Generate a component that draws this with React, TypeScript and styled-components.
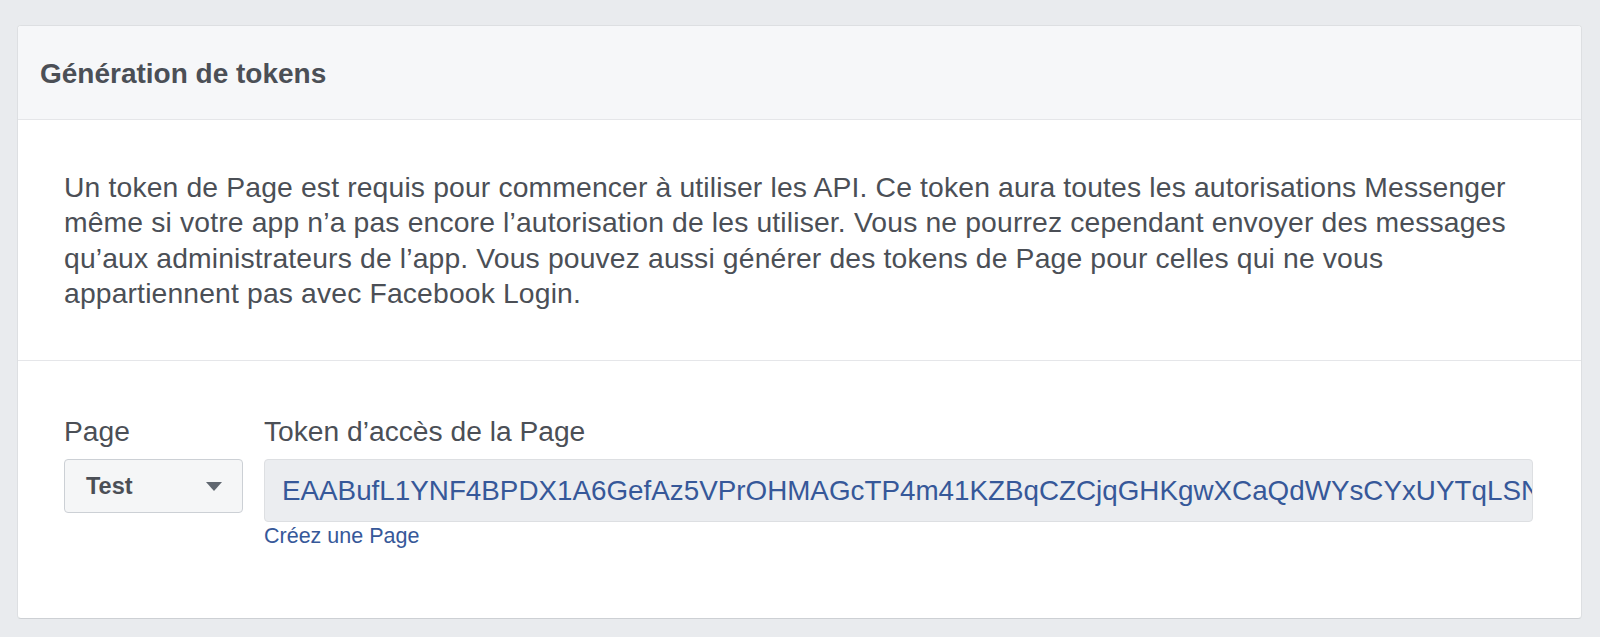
import styled, { createGlobalStyle } from "styled-components";

const GlobalStyle = createGlobalStyle`
  html, body {
    margin: 0;
    padding: 0;
    background-color: #e9ebee;
    font-family: "Liberation Sans", Arial, Helvetica, sans-serif;
  }
  #root {
    min-height: 637px;
    padding-top: 25px;
    box-sizing: border-box;
  }
`;

const Card = styled.section`
  margin: 0 18px 0 17px;
  background-color: #fff;
  border: 1px solid #dddfe2;
  border-bottom-color: #cdd0d4;
  border-radius: 4px;
  overflow: hidden;
`;

const CardHeader = styled.header`
  height: 94px;
  display: flex;
  align-items: center;
  padding: 2px 22px 0;
  box-sizing: border-box;
  background-color: #f6f7f9;
  border-bottom: 1px solid #e5e6e9;
  h2 {
    margin: 0;
    font-size: 28px;
    line-height: 35.3px;
    font-weight: bold;
    color: #4b4f56;
  }
`;

const Intro = styled.p`
  margin: 0;
  padding: 50px 40px 49px 46px;
  font-size: 28.3px;
  letter-spacing: 0.15px;
  line-height: 35.3px;
  color: #4b4f56;
  border-bottom: 1px solid #e5e6e9;
  white-space: nowrap;
`;

const FormRow = styled.div`
  display: flex;
  align-items: flex-start;
  gap: 21px;
  padding: 53px 48px 68px 46px;
`;

const Field = styled.div<{ $grow?: boolean }>`
  display: flex;
  flex-direction: column;
  flex: ${(p) => (p.$grow ? "1 1 auto" : "0 0 179px")};
  min-width: 0;
  label {
    font-size: 28.2px;
    line-height: 35.3px;
    color: #4b4f56;
    margin-bottom: 10px;
  }
`;

const SelectBox = styled.div`
  height: 54px;
  box-sizing: border-box;
  display: flex;
  align-items: center;
  justify-content: space-between;
  padding: 0 20px 0 21px;
  background-color: #f5f6f7;
  border: 1px solid #ccd0d5;
  border-radius: 4px;
  font-size: 23.5px;
  font-weight: bold;
  color: #4b4f56;
`;

const Arrow = styled.span`
  width: 0;
  height: 0;
  border-left: 8.5px solid transparent;
  border-right: 8.5px solid transparent;
  border-top: 9px solid #606770;
`;

const TokenInput = styled.div`
  height: 63px;
  box-sizing: border-box;
  display: flex;
  align-items: center;
  padding: 0 2px 0 17px;
  background-color: #ebedf0;
  border: 1px solid #dddfe2;
  border-radius: 4px;
  font-size: 27.8px;
  color: #365899;
  white-space: nowrap;
  overflow: hidden;
  text-overflow: clip;
`;

const HelpLink = styled.a`
  font-size: 21.5px;
  line-height: 28px;
  color: #365899;
  text-decoration: none;
`;

export default function App() {
  return (
    <>
      <GlobalStyle />
      <Card>
        <CardHeader>
          <h2>Génération de tokens</h2>
        </CardHeader>
        <Intro>
          Un token de Page est requis pour commencer à utiliser les API. Ce token aura toutes les autorisations Messenger
          <br />
          même si votre app n’a pas encore l’autorisation de les utiliser. Vous ne pourrez cependant envoyer des messages
          <br />
          qu’aux administrateurs de l’app. Vous pouvez aussi générer des tokens de Page pour celles qui ne vous
          <br />
          appartiennent pas avec Facebook Login.
        </Intro>
        <FormRow>
          <Field>
            <label>Page</label>
            <SelectBox>
              <span>Test</span>
              <Arrow />
            </SelectBox>
          </Field>
          <Field $grow>
            <label>Token d’accès de la Page</label>
            <TokenInput>EAABufL1YNF4BPDX1A6GefAz5VPrOHMAGcTP4m41KZBqCZCjqGHKgwXCaQdWYsCYxUYTqLSN</TokenInput>
            <HelpLink href="#">Créez une Page</HelpLink>
          </Field>
        </FormRow>
      </Card>
    </>
  );
}
